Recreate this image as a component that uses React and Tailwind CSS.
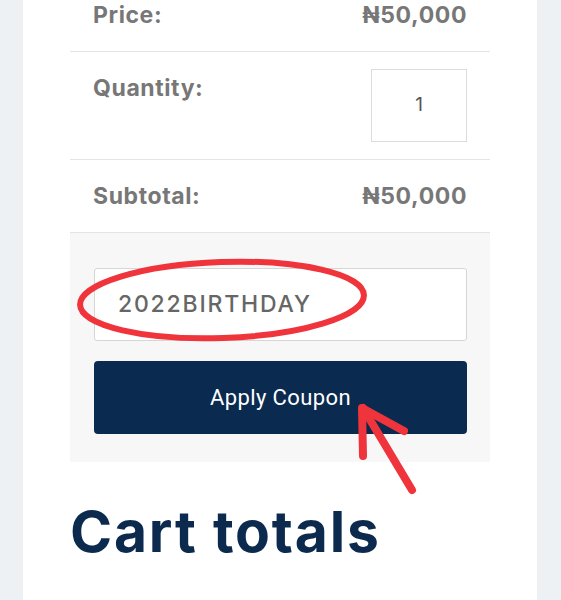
export default function App() {
  const font = { fontFamily: "Inter, 'Noto Sans', sans-serif" };
  return (
    <div className="relative h-[600px] w-[561px] overflow-hidden bg-[#edf1f4] pl-[23px] pr-[24px]" style={font}>
      <div className="h-full bg-white px-[47px]">
        {/* Price */}
        <div className="flex items-center justify-between border-b border-[#e4e4e4] px-[23px] pb-[21px] text-[23px] leading-[30px] font-bold tracking-[0.6px] text-[#777]">
          <span>Price:</span>
          <span>₦50,000</span>
        </div>

        {/* Quantity */}
        <div className="flex justify-between border-b border-[#e4e4e4] px-[23px] py-[17px]">
          <span className="pt-[4px] text-[23px] leading-[30px] font-bold tracking-[0.6px] text-[#777]">
            Quantity:
          </span>
          <div className="flex h-[73px] w-[96px] items-center justify-center border border-[#dcdcdc] text-[19px] text-[#555]">
            1
          </div>
        </div>

        {/* Subtotal */}
        <div className="flex items-center justify-between border-b border-[#e4e4e4] px-[23px] py-[21px] text-[23px] leading-[30px] font-bold tracking-[0.6px] text-[#777]">
          <span>Subtotal:</span>
          <span>₦50,000</span>
        </div>

        {/* Coupon */}
        <div className="flex flex-col gap-[20px] bg-[#f7f7f7] pt-[35px] pr-[23px] pb-[28px] pl-[24px]">
          <div className="flex h-[73px] items-center rounded-[3px] border border-[#d6d6d6] bg-white pl-[23px] text-[23px] font-medium tracking-[1.8px] text-[#666]">
            2022BIRTHDAY
          </div>
          <button
            className="flex h-[73px] items-center justify-center rounded-[4px] bg-[#0a2a4f] text-[22px] tracking-[0.4px] text-white"
            style={{ fontFamily: "Roboto, sans-serif" }}
          >
            Apply Coupon
          </button>
        </div>

        <h2 className="pt-[38px] text-[57px] leading-[64px] font-bold tracking-[1.8px] text-[#0b2a4e]">
          Cart totals
        </h2>
      </div>

      {/* annotation */}
      <svg className="pointer-events-none absolute left-0 top-0" width="561" height="600" viewBox="0 0 561 600">
        <ellipse cx="222" cy="300" rx="142" ry="38" fill="none" stroke="#f0343c" strokeWidth="6" transform="rotate(-2 222 300)" />
        <g stroke="#f0343c" strokeWidth="8" strokeLinecap="round" strokeLinejoin="round" fill="none">
          <path d="M412 490 L363 408" />
          <path d="M363 456 L362 408 L404 431" />
        </g>
      </svg>
    </div>
  );
}
